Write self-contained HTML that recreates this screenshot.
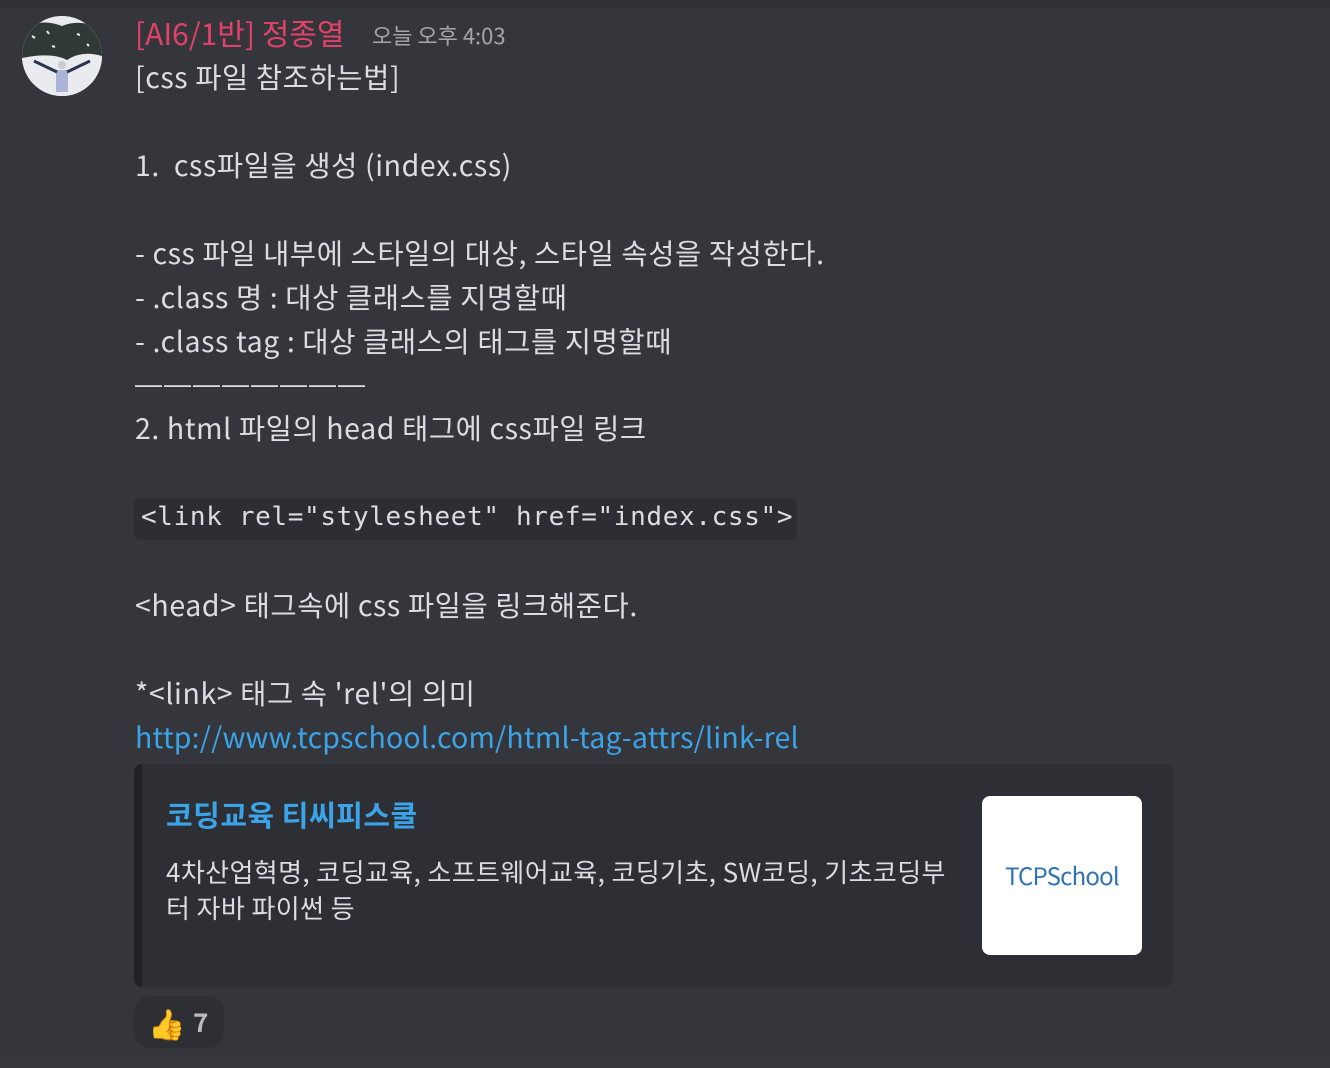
<!DOCTYPE html>
<html><head><meta charset="utf-8"><style>
html,body{margin:0;padding:0;}
body{width:1330px;height:1068px;background:#35363c;position:relative;overflow:hidden;font-family:"Noto Sans CJK KR","Liberation Sans",sans-serif;color:#dcddde;}
.top{position:absolute;left:0;top:0;width:1330px;height:8px;background:#303136;}
.bot{position:absolute;left:0;top:1056px;width:1330px;height:12px;background:#37383e;}
.av{position:absolute;left:22px;top:16px;width:80px;height:80px;border-radius:50%;overflow:hidden;background:#e9ebee;}
.name{position:absolute;left:135px;top:12px;font-size:30px;line-height:40px;color:#e2426a;white-space:nowrap;}
.ts{position:absolute;left:372px;top:19px;font-size:22px;line-height:32px;color:#a3a6aa;white-space:nowrap;}
.l{position:absolute;left:135px;font-size:28.5px;letter-spacing:0.6px;line-height:44px;white-space:nowrap;color:#dcddde;}
.code{position:absolute;left:134px;top:498px;width:663px;height:42px;background:#2d2e33;border-radius:6px;}
.code span{position:absolute;left:7px;top:4px;font-family:"DejaVu Sans Mono","Liberation Mono",monospace;font-size:26px;letter-spacing:0.65px;color:#dcddde;white-space:nowrap;}
.link{color:#3ba4e8;}
.embed{position:absolute;left:134px;top:764px;width:1039px;height:223px;background:#2e2f34;border-radius:8px;overflow:hidden;}
.embed .bar{position:absolute;left:0;top:0;width:8px;height:223px;background:#202225;}
.et{position:absolute;left:32px;top:30px;font-size:29px;letter-spacing:0.5px;line-height:40px;font-weight:bold;color:#3ba4e8;white-space:nowrap;}
.ed{position:absolute;left:32px;top:90px;width:785px;font-size:26px;letter-spacing:0.4px;line-height:36px;color:#dcddde;}
.thumb{position:absolute;left:848px;top:32px;width:160px;height:159px;background:#fff;border-radius:8px;}
.thumb span{position:absolute;left:0;width:160px;top:62px;text-align:center;font-size:24px;line-height:34px;color:#2f72b8;letter-spacing:-0.8px;}
.react{position:absolute;left:134px;top:996px;width:90px;height:52px;background:#2e2f34;border-radius:16px;}
.react .e{position:absolute;left:14px;top:8px;font-size:30px;line-height:36px;}
.react .n{position:absolute;left:59px;top:8px;font-size:26px;line-height:36px;font-weight:bold;color:#b9bbbe;}
</style></head><body>
<div class="top"></div>
<div class="bot"></div>
<div class="av">
<svg width="80" height="80" viewBox="0 0 80 80"><rect width="80" height="80" fill="#e9ebee"/><path d="M0 12 Q20 2 40 10 Q60 2 80 14 L80 40 Q60 34 45 44 Q30 36 0 42Z" fill="#2f3a36"/><path d="M10 20 l3 2 M25 15 l2 3 M55 18 l3 1 M65 28 l2 2 M30 30 l3 1" stroke="#e9ebee" stroke-width="2"/><circle cx="40" cy="49" r="4" fill="#ccc"/><rect x="34" y="54" width="12" height="22" fill="#a9b4d6"/><path d="M12 45 L35 56 M68 45 L45 56" stroke="#2b3550" stroke-width="3"/></svg>
</div>
<div class="name">[AI6/1반] 정종열</div>
<div class="ts">오늘 오후 4:03</div>
<div class="l" style="top:55px">[css 파일 참조하는법]</div>
<div class="l" style="top:143px">1.&nbsp; css파일을 생성 (index.css)</div>
<div class="l" style="top:231px">- css 파일 내부에 스타일의 대상, 스타일 속성을 작성한다.</div>
<div class="l" style="top:275px">- .class 명 : 대상 클래스를 지명할때</div>
<div class="l" style="top:319px">- .class tag : 대상 클래스의 태그를 지명할때</div>
<div class="l" style="top:362px;font-family:'Liberation Sans',sans-serif;font-size:27px;letter-spacing:2px">————————</div>
<div class="l" style="top:406px">2. html 파일의 head 태그에 css파일 링크</div>
<div class="code"><span>&lt;link rel="stylesheet" href="index.css"&gt;</span></div>
<div class="l" style="top:583px">&lt;head&gt; 태그속에 css 파일을 링크해준다.</div>
<div class="l" style="top:671px">*&lt;link&gt; 태그 속 'rel'의 의미</div>
<div class="l link" style="top:715px;letter-spacing:0.2px">http://www.tcpschool.com/html-tag-attrs/link-rel</div>
<div class="embed"><div class="bar"></div>
<div class="et">코딩교육 티씨피스쿨</div>
<div class="ed">4차산업혁명, 코딩교육, 소프트웨어교육, 코딩기초, SW코딩, 기초코딩부<br>터 자바 파이썬 등</div>
<div class="thumb"><span>TCPSchool</span></div>
</div>
<div class="react"><span class="e">👍</span><span class="n">7</span></div>
</body></html>
